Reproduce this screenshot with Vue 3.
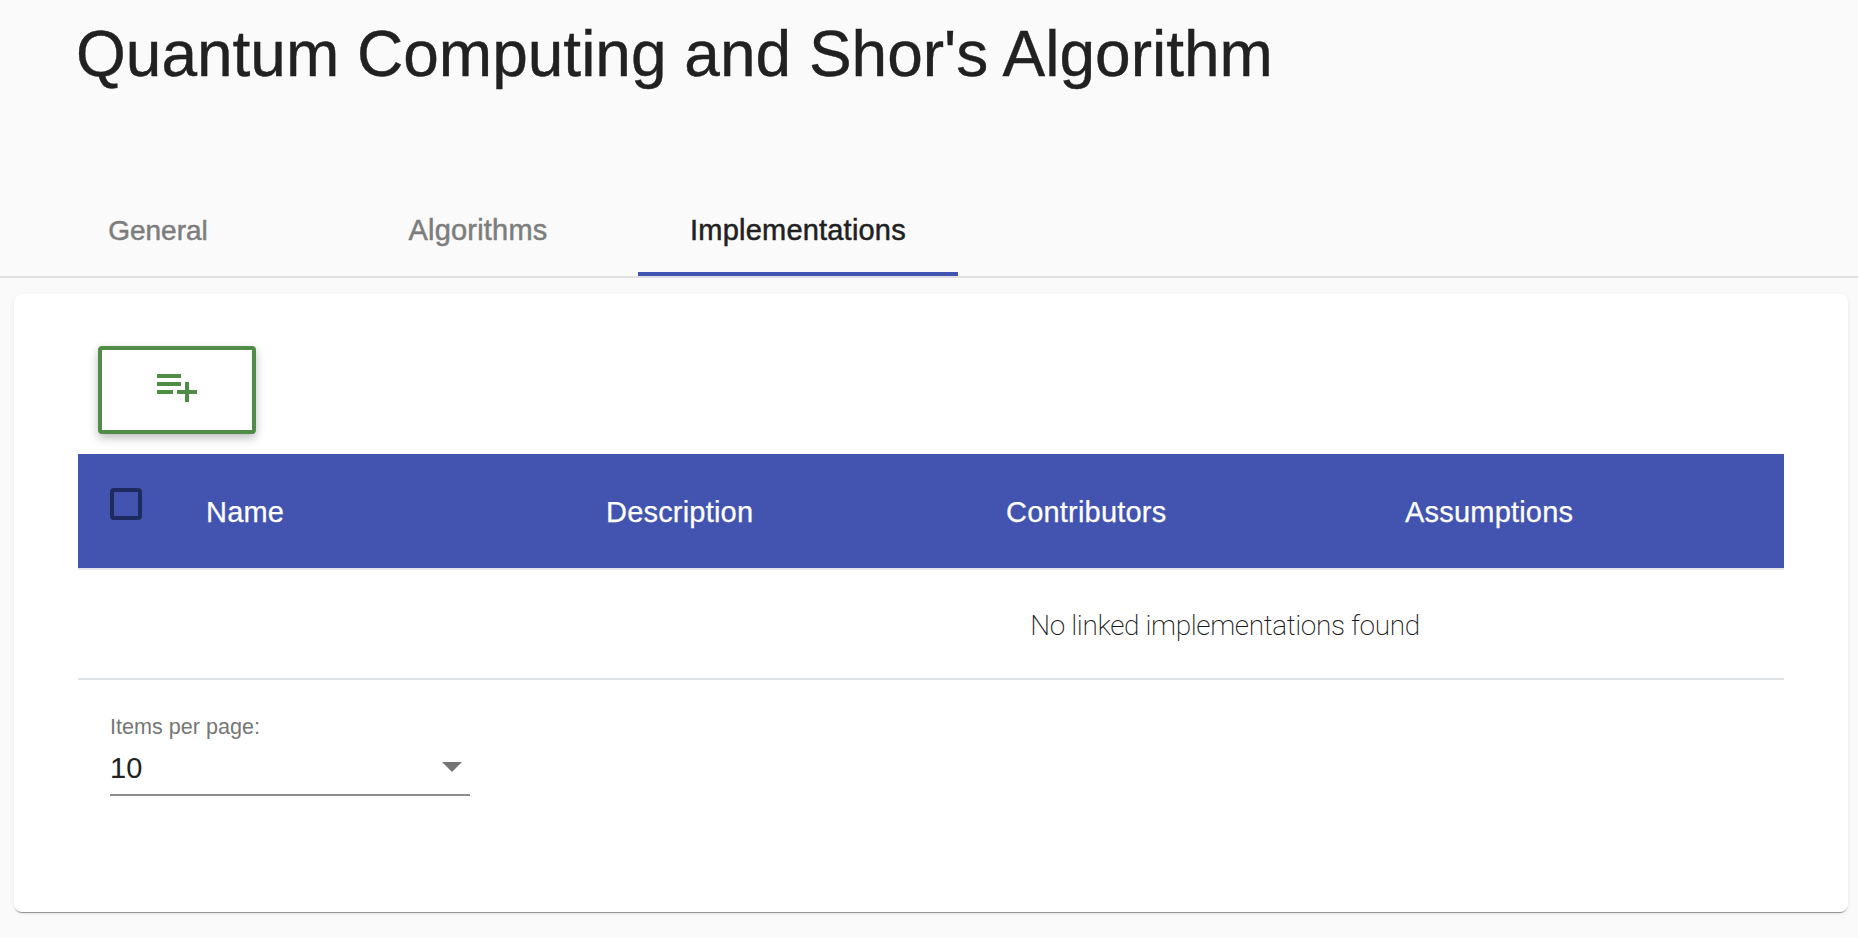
<script setup>
const tabs = [
  { label: 'General', active: false },
  { label: 'Algorithms', active: false },
  { label: 'Implementations', active: true }
]
const columns = ['Name', 'Description', 'Contributors', 'Assumptions']
</script>

<template>
  <div class="page">
    <header class="title-bar">
      <h1>Quantum Computing and Shor's Algorithm</h1>
    </header>

    <nav class="tabs">
      <div
        v-for="tab in tabs"
        :key="tab.label"
        :class="tab.active ? 'tab active' : 'tab'"
      >
        {{ tab.label }}
      </div>
    </nav>

    <main class="card">
      <button class="add-btn" aria-label="Add implementation">
        <svg viewBox="0 0 24 24" width="48" height="48" fill="#4f8c45">
          <path d="M14 10H2v2h12v-2zm0-4H2v2h12V6zm4 8v-4h-2v4h-4v2h4v4h2v-4h4v-2h-4zM2 16h8v-2H2v2z" />
        </svg>
      </button>

      <section class="table">
        <div class="thead">
          <div class="select-cell"><span class="checkbox"></span></div>
          <div v-for="col in columns" :key="col" class="th">{{ col }}</div>
        </div>
        <div class="empty">No linked implementations found</div>
      </section>

      <div class="paginator">
        <div class="page-label">Items per page:</div>
        <div class="page-select">
          <span class="page-value">10</span>
          <span class="arrow"></span>
        </div>
      </div>
    </main>
  </div>
</template>

<style>
html, body {
  margin: 0;
  background: #fafafa;
}
</style>

<style scoped>
.page {
  height: 938px;
  overflow: hidden;
  background: #fafafa;
  font-family: "Liberation Sans", Arial, sans-serif;
}
.title-bar {
  height: 184px;
  box-sizing: border-box;
  padding-left: 76px;
}
h1 {
  margin: 0;
  padding-top: 17px;
  font-size: 64px;
  line-height: 74px;
  font-weight: 400;
  color: #212121;
  -webkit-text-stroke: 0.4px currentColor;
}
.tabs {
  display: flex;
  height: 94px;
  box-sizing: border-box;
  border-bottom: 2px solid #e0e0e0;
  margin-bottom: 16px;
}
.tab {
  width: 320px;
  height: 92px;
  box-sizing: border-box;
  display: flex;
  align-items: center;
  justify-content: center;
  padding-top: 1px;
  font-size: 29px;
  font-weight: 400;
  letter-spacing: 0.2px;
  color: #7d7d7d;
  -webkit-text-stroke: 0.5px currentColor;
}
.tab:first-child {
  margin-left: -2px;
  font-size: 28px;
  letter-spacing: 0;
}
.tab.active {
  color: #212121;
  border-bottom: 4px solid #4254b2;
  padding-top: 5px;
}
.card {
  margin: 0 10px 0 14px;
  height: 618px;
  box-sizing: border-box;
  padding: 52px 64px 0;
  background: #fff;
  border-radius: 8px;
  box-shadow: 0 2px 1px -1px rgba(0, 0, 0, 0.4), 0 1px 4px rgba(0, 0, 0, 0.08);
}
.add-btn {
  display: flex;
  align-items: flex-start;
  justify-content: center;
  width: 158px;
  height: 88px;
  margin: 0 0 20px 20px;
  padding: 12px 0 0;
  box-sizing: border-box;
  background: #fff;
  border: 4px solid #4f8c45;
  border-radius: 4px;
  box-shadow: 0 4px 10px rgba(0, 0, 0, 0.26);
}
.thead {
  display: grid;
  grid-template-columns: 128px 400px 400px 399px 1fr;
  height: 114px;
  background: #4254b0;
  color: #fff;
  font-size: 29px;
  letter-spacing: 0.2px;
  -webkit-text-stroke: 0.25px currentColor;
}
.select-cell {
  padding: 34px 0 0 32px;
}
.checkbox {
  display: block;
  width: 32px;
  height: 32px;
  box-sizing: border-box;
  border: 4px solid #1f2a5e;
  border-radius: 4px;
}
.th {
  display: flex;
  align-items: center;
  padding-top: 2px;
}
.empty {
  height: 112px;
  box-sizing: border-box;
  padding: 2px 0 0 588px;
  border-top: 2px solid #e3e5ea;
  border-bottom: 2px solid #e0e3e5;
  display: flex;
  align-items: center;
  justify-content: center;
  font-family: Roboto, "Liberation Sans", sans-serif;
  font-size: 28px;
  font-weight: 200;
  letter-spacing: -0.38px;
  color: #1a1a1a;
}
.paginator {
  width: 360px;
  margin: 34px 0 0 32px;
}
.page-label {
  font-size: 21.6px;
  line-height: 26px;
  color: #777;
}
.page-select {
  display: flex;
  align-items: flex-start;
  justify-content: space-between;
  height: 50px;
  padding: 4px 8px 0 0;
  box-sizing: border-box;
  margin-top: 6px;
  font-size: 28px;
  line-height: 32px;
  color: #212121;
  border-bottom: 2px solid #8f8f8f;
}
.page-value {
  margin-top: 2px;
  font-size: 29px;
}
.arrow {
  width: 0;
  height: 0;
  margin-top: 12px;
  border-left: 10px solid transparent;
  border-right: 10px solid transparent;
  border-top: 10px solid #757575;
}
</style>
